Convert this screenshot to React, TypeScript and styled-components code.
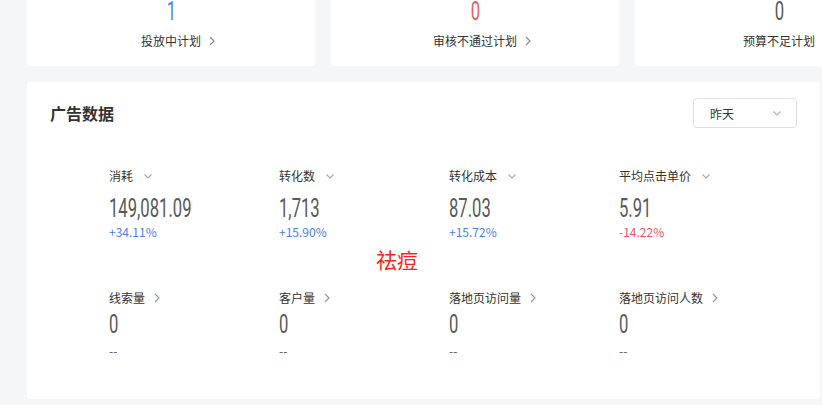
import React from "react";
import styled, { createGlobalStyle } from "styled-components";

const GlobalStyle = createGlobalStyle`
  html, body {
    margin: 0;
    padding: 0;
    background: #f5f6f8;
    overflow: hidden;
    font-family: "Noto Sans CJK SC", "Noto Sans", sans-serif;
  }
  * { box-sizing: border-box; }
`;

const Page = styled.div`
  width: 822px;
  padding: 0 2px 0 27px;
`;

const SummaryRow = styled.div`
  display: flex;
  gap: 16px;
  margin-top: -20px;
`;

const SummaryCard = styled.div`
  flex: 0 0 288px;
  background: #fff;
  border-radius: 4px;
  padding: 20px 0 16px;
  display: flex;
  flex-direction: column;
  align-items: center;
`;

const NumberText = styled.span<{ $color?: string }>`
  display: inline-block;
  font-family: "Roboto", "Liberation Sans", sans-serif;
  font-size: 26px;
  line-height: 30px;
  font-weight: 400;
  color: ${(p) => p.$color || "#595959"};
  transform: scaleX(0.64);
  transform-origin: left center;
  white-space: nowrap;
`;

const SummaryNumber = styled(NumberText)`
  line-height: 22px;
  transform-origin: center center;
`;

const SummaryLabel = styled.div`
  position: relative;
  margin-top: 10px;
  font-size: 12px;
  line-height: 18px;
  color: #333;
`;

const SummaryArrow = styled.span`
  position: absolute;
  left: calc(100% + 8px);
  top: 4px;
  display: flex;
`;

const MainCard = styled.section`
  position: relative;
  margin-top: 16px;
  height: 317px;
  background: #fff;
  border-radius: 4px;
  padding: 16px 23px 0 23px;
`;

const Header = styled.div`
  display: flex;
  justify-content: space-between;
  align-items: center;
  height: 30px;
`;

const Title = styled.h2`
  margin: 0;
  font-size: 16px;
  line-height: 22px;
  font-weight: 700;
  color: #333;
`;

const Select = styled.div`
  width: 104px;
  height: 30px;
  border: 1px solid #dcdfe6;
  border-radius: 4px;
  padding: 0 15px 0 16px;
  display: flex;
  align-items: center;
  justify-content: space-between;
  font-size: 12px;
  color: #333;
`;

const MetricGrid = styled.div`
  display: grid;
  grid-template-columns: repeat(4, 170px);
  row-gap: 48px;
  margin-top: 39px;
  padding-left: 59px;
`;

const Metric = styled.div`
  display: flex;
  flex-direction: column;
  align-items: flex-start;
`;

const MetricLabel = styled.div<{ $gap: number }>`
  display: flex;
  align-items: center;
  font-size: 12px;
  line-height: 18px;
  color: #333;
  margin-bottom: ${(p) => p.$gap}px;
`;

const LabelIcon = styled.span<{ $space: number }>`
  display: flex;
  margin-left: ${(p) => p.$space}px;
`;

const MetricChange = styled.div<{ $color: string; $gap: number }>`
  margin-top: ${(p) => p.$gap}px;
  font-size: 12px;
  line-height: 18px;
  color: ${(p) => p.$color};
`;

const Watermark = styled.span`
  position: absolute;
  left: 349px;
  top: 167px;
  font-size: 21px;
  line-height: 1;
  color: #ff1f1f;
`;

const ChevronRight = ({ color = "#999" }: { color?: string }) => (
  <svg width="6" height="10" viewBox="0 0 6 10">
    <polyline points="1,1 5,5 1,9" fill="none" stroke={color} strokeWidth="1.2" />
  </svg>
);

const ChevronDown = ({ color = "#aaa" }: { color?: string }) => (
  <svg width="8" height="5" viewBox="0 0 8 5">
    <polyline points="0.5,0.5 4,4 7.5,0.5" fill="none" stroke={color} strokeWidth="1.1" />
  </svg>
);

const BLUE = "#4a7cf6";
const RED = "#f0506a";

const summaries = [
  { value: "1", color: "#4b84ff", label: "投放中计划" },
  { value: "0", color: "#f35a5a", label: "审核不通过计划" },
  { value: "0", color: "#595959", label: "预算不足计划" },
];

type M = { label: string; value: string; change: string; color: string };

const topMetrics: M[] = [
  { label: "消耗", value: "149,081.09", change: "+34.11%", color: BLUE },
  { label: "转化数", value: "1,713", change: "+15.90%", color: BLUE },
  { label: "转化成本", value: "87.03", change: "+15.72%", color: BLUE },
  { label: "平均点击单价", value: "5.91", change: "-14.22%", color: RED },
];

const bottomMetrics: M[] = [
  { label: "线索量", value: "0", change: "--", color: "#555" },
  { label: "客户量", value: "0", change: "--", color: "#555" },
  { label: "落地页访问量", value: "0", change: "--", color: "#555" },
  { label: "落地页访问人数", value: "0", change: "--", color: "#555" },
];

export default function App() {
  return (
    <>
      <GlobalStyle />
      <Page>
        <SummaryRow>
          {summaries.map((s) => (
            <SummaryCard key={s.label}>
              <SummaryNumber $color={s.color}>{s.value}</SummaryNumber>
              <SummaryLabel>
                {s.label}
                <SummaryArrow>
                  <ChevronRight color="#8c8c8c" />
                </SummaryArrow>
              </SummaryLabel>
            </SummaryCard>
          ))}
        </SummaryRow>
        <MainCard>
          <Header>
            <Title>广告数据</Title>
            <Select>
              <span>昨天</span>
              <ChevronDown color="#b0b0b0" />
            </Select>
          </Header>
          <MetricGrid>
            {topMetrics.map((m) => (
              <Metric key={m.label}>
                <MetricLabel $gap={8}>
                  {m.label}
                  <LabelIcon $space={11}>
                    <ChevronDown />
                  </LabelIcon>
                </MetricLabel>
                <NumberText>{m.value}</NumberText>
                <MetricChange $color={m.color} $gap={0}>
                  {m.change}
                </MetricChange>
              </Metric>
            ))}
            {bottomMetrics.map((m) => (
              <Metric key={m.label}>
                <MetricLabel $gap={2}>
                  {m.label}
                  <LabelIcon $space={9}>
                    <ChevronRight />
                  </LabelIcon>
                </MetricLabel>
                <NumberText>{m.value}</NumberText>
                <MetricChange $color={m.color} $gap={3}>
                  {m.change}
                </MetricChange>
              </Metric>
            ))}
          </MetricGrid>
          <Watermark>祛痘</Watermark>
        </MainCard>
      </Page>
    </>
  );
}
